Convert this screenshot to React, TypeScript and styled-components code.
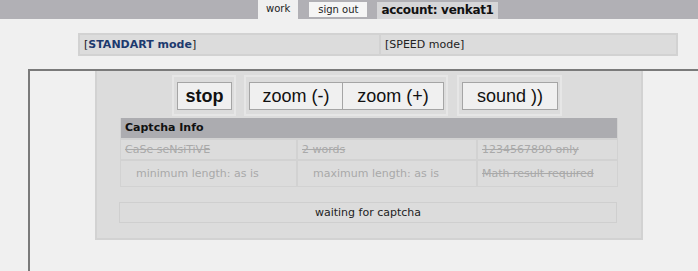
import React from 'react';
import styled, { createGlobalStyle } from 'styled-components';

const GlobalStyle = createGlobalStyle`
  html, body {
    margin: 0;
    padding: 0;
    background: #f0f0f0;
    font-family: 'DejaVu Sans', Verdana, sans-serif;
    overflow: hidden;
  }
`;

const TopBar = styled.div`
  display: flex;
  align-items: flex-start;
  height: 19px;
  padding-left: 258px;
  background: #b1b0b5;
`;

const Tab = styled.div<{ active?: boolean }>`
  height: ${p => (p.active ? '19px' : '15px')};
  margin-top: ${p => (p.active ? '0' : '2px')};
  margin-right: ${p => (p.active ? '11px' : '10px')};
  padding: 0 ${p => (p.active ? '8px' : '9px')};
  background: ${p => (p.active ? '#f0f0f0' : '#f5f5f5')};
  font-size: 10px;
  line-height: ${p => (p.active ? '17px' : '15px')};
  color: #222;
  cursor: pointer;
`;

const Account = styled.div`
  margin-top: 2px;
  height: 17px;
  padding: 0 4px;
  background: #d6d6d8;
  font-size: 12px;
  font-weight: bold;
  letter-spacing: -0.3px;
  line-height: 17px;
  color: #111;
`;

const ModeTable = styled.div`
  display: grid;
  grid-template-columns: 299px 1fr;
  width: 600px;
  height: 23px;
  margin: 14px 0 0 78px;
  box-sizing: border-box;
  border: 2px solid #d2d2d2;
  background: #dcdcdc;
`;

const ModeCell = styled.div`
  padding-left: 4px;
  font-size: 11px;
  line-height: 19px;
  color: #222;
  & + & {
    border-left: 2px solid #d2d2d2;
  }
  b {
    color: #1d3a6e;
  }
`;

const Workspace = styled.div`
  margin: 13px 0 0 28px;
  height: 200px;
  border-top: 2px solid #7a7a7a;
  border-left: 2px solid #7a7a7a;
  padding-left: 65px;
`;

const Panel = styled.div`
  width: 548px;
  height: 169px;
  box-sizing: border-box;
  border: 2px solid #d2d2d2;
  border-top: 0;
  background: #dcdcdc;
  padding: 4px 23px 0 23px;
`;

const Controls = styled.div`
  display: flex;
  justify-content: center;
  margin-left: -4px;
`;

const Group = styled.div<{ gap?: number }>`
  display: flex;
  margin-left: ${p => p.gap ?? 0}px;
  padding: 5px 2px 4px 3px;
  border: 2px solid #e6e6e6;
`;

const Button = styled.button<{ strong?: boolean; w: number }>`
  width: ${p => p.w}px;
  height: 28px;
  padding: 0;
  border: 1px solid #a5a5a5;
  background: #f0f0f0;
  font-family: 'Liberation Sans', Arial, sans-serif;
  font-size: 18px;
  font-weight: ${p => (p.strong ? 'bold' : 'normal')};
  color: #111;
  cursor: pointer;
  & + & {
    border-left: 0;
  }
`;

const InfoTable = styled.div`
  margin-top: 2px;
  display: grid;
  grid-template-columns: 175px 180px 1fr;
  border: 1px solid #d2d2d2;
  border-top: 0;
`;

const InfoHead = styled.div`
  grid-column: 1 / 4;
  height: 20px;
  padding-left: 4px;
  background: #acacb0;
  font-size: 11px;
  font-weight: bold;
  line-height: 20px;
  color: #111;
`;

const InfoCell = styled.div<{ struck?: boolean; indent?: boolean; tall?: boolean }>`
  height: ${p => (p.tall ? '25px' : '19px')};
  padding-left: ${p => (p.indent ? '15px' : '4px')};
  border-top: 2px solid #d2d2d2;
  border-left: 2px solid #d2d2d2;
  font-size: 11px;
  line-height: ${p => (p.tall ? '25px' : '19px')};
  color: #a9a9a9;
  text-decoration: ${p => (p.struck ? 'line-through' : 'none')};
  white-space: nowrap;
  &:nth-child(3n + 2) {
    border-left: 0;
  }
`;

const Status = styled.div`
  margin: 15px 1px 0 -1px;
  height: 19px;
  border: 1px solid #cfcfcf;
  text-align: center;
  font-size: 11px;
  line-height: 19px;
  color: #222;
`;

const App: React.FC = () => {
  return <>
    <GlobalStyle />
    <TopBar>
      <Tab active>work</Tab>
      <Tab>sign out</Tab>
      <Account>account: venkat1</Account>
    </TopBar>
    <ModeTable>
      <ModeCell>[<b>STANDART mode</b>]</ModeCell>
      <ModeCell>[SPEED mode]</ModeCell>
    </ModeTable>
    <Workspace>
      <Panel>
        <Controls>
          <Group>
            <Button strong w={55}>stop</Button>
          </Group>
          <Group gap={8}>
            <Button w={94}>zoom (-)</Button>
            <Button w={101}>zoom (+)</Button>
          </Group>
          <Group gap={9}>
            <Button w={96}>sound ))</Button>
          </Group>
        </Controls>
        <InfoTable>
          <InfoHead>Captcha Info</InfoHead>
          <InfoCell struck>CaSe seNsiTiVE</InfoCell>
          <InfoCell struck>2 words</InfoCell>
          <InfoCell struck>1234567890 only</InfoCell>
          <InfoCell indent tall>minimum length: as is</InfoCell>
          <InfoCell indent tall>maximum length: as is</InfoCell>
          <InfoCell struck tall>Math result required</InfoCell>
        </InfoTable>
        <Status>waiting for captcha</Status>
      </Panel>
    </Workspace>
  </>;
};

export default App;
